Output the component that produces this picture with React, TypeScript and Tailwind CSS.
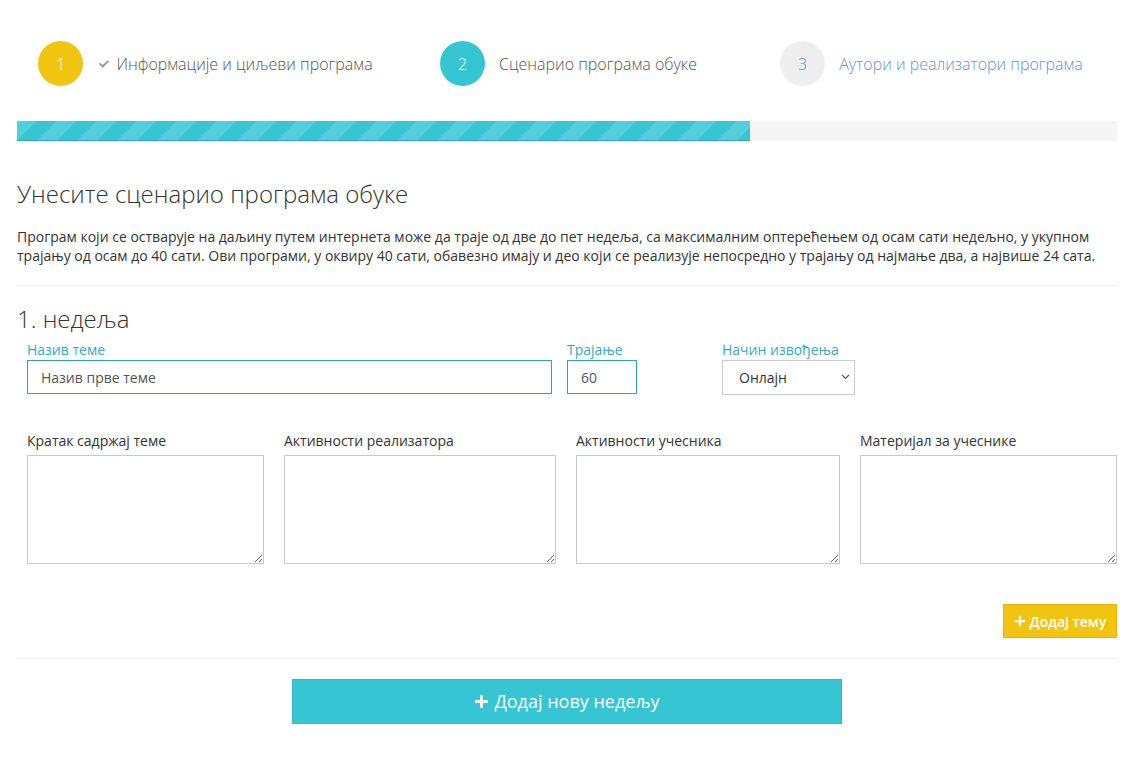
import React from "react";
import { FaCheck, FaPlus } from "react-icons/fa";

function Step({ n, label, state }: { n: string; label: string; state: "done" | "active" | "todo" }) {
  const circle =
    state === "done"
      ? "bg-[#f1c40f] text-white"
      : state === "active"
      ? "bg-[#36c5d3] text-white"
      : "bg-[#eeeeee] text-[#6c8dc6]";
  const text = state === "todo" ? "text-[#6f8fc4]" : "text-[#555555]";
  return (
    <div className="flex items-center justify-center">
      <div className={`w-[45px] h-[45px] rounded-full flex items-center justify-center text-[16px] font-light ${circle}`}>
        {n}
      </div>
      {state === "done" ? (
        <div className="flex items-center ml-[16px]">
          <FaCheck className="text-[#9a9a9a] w-[10px] h-[10px]" />
          <span className={`ml-[7px] text-[16px] font-light ${text}`}>{label}</span>
        </div>
      ) : (
        <span className={`ml-[14px] text-[16px] font-light ${text}`}>{label}</span>
      )}
    </div>
  );
}

export default function App() {
  const areas = ["Кратак садржај теме", "Активности реализатора", "Активности учесника", "Материјал за учеснике"];
  return (
    <div className="min-h-screen bg-white font-['Open_Sans',sans-serif] text-[#333333] pl-[17px] pr-[15px] text-[14px]">
      <div className="grid grid-cols-3 pt-[41px] ml-[7px] mr-[4px]">
        <Step n="1" label="Информације и циљеви програма" state="done" />
        <Step n="2" label="Сценарио програма обуке" state="active" />
        <Step n="3" label="Аутори и реализатори програма" state="todo" />
      </div>

      <div className="mt-[35px] h-[20px] bg-[#f4f4f4] flex">
        <div className="w-[66.64%] h-full bg-[#36c5d3] bg-[linear-gradient(135deg,rgba(255,255,255,.15)_25%,transparent_25%,transparent_50%,rgba(255,255,255,.15)_50%,rgba(255,255,255,.15)_75%,transparent_75%,transparent)] bg-[length:40px_40px] border-b border-[#2aacb8]" />
      </div>

      <h3 className="mt-[40px] text-[24px] font-light leading-[26px] text-[#333333]">Унесите сценарио програма обуке</h3>
      <p className="mt-[20px] leading-[19px] text-[14px] text-[#333333]">
        Програм који се остварује на даљину путем интернета може да траје од две до пет недеља, са максималним оптерећењем од осам сати недељно, у укупном трајању од осам до 40 сати. Ови програми, у оквиру 40 сати, обавезно имају и део који се реализује непосредно у трајању од најмање два, а највише 24 сата.
      </p>
      <div className="mt-[20px] border-t border-[#eeeeee]" />

      <h4 className="mt-[20px] text-[24px] font-light leading-[26px] text-[#333333]">1. недеља</h4>

      <div className="flex px-[10px] mt-[8px]">
        <div className="w-[525px]">
          <div className="leading-[20px] text-[#3ba8b6]">Назив теме</div>
          <input
            defaultValue="Назив прве теме"
            className="w-full h-[34px] border border-[#2ea5b0] px-[13px] text-[14px] text-[#555555] outline-none"
          />
        </div>
        <div className="w-[70px] ml-[15px]">
          <div className="leading-[20px] text-[#3ba8b6]">Трајање</div>
          <input
            defaultValue="60"
            className="w-full h-[34px] border border-[#2ea5b0] px-[13px] text-[14px] text-[#555555] outline-none"
          />
        </div>
        <div className="w-[133px] ml-[85px]">
          <div className="leading-[20px] text-[#3ba8b6]">Начин извођења</div>
          <div className="relative">
            <select className="appearance-none w-full h-[35px] border border-[#cccccc] bg-white pl-[16px] text-[14px] text-[#333333] outline-none">
              <option>Онлајн</option>
            </select>
            <svg className="absolute right-[5px] top-[14px] w-[9px] h-[6px]" viewBox="0 0 9 6" fill="none">
              <path d="M1 1l3.5 3.5L8 1" stroke="#555" strokeWidth="1.2" />
            </svg>
          </div>
        </div>
      </div>

      <div className="grid grid-cols-[237px_272px_264px_257px] gap-x-[20px] pl-[10px] mt-[36px]">
        {areas.map((a) => (
          <div key={a}>
            <div className="leading-[20px] text-[#333333] mb-[4px]">{a}</div>
            <textarea className="block w-full h-[109px] border border-[#c3cad6] outline-none" />
          </div>
        ))}
      </div>

      <div className="flex justify-end mt-[40px]">
        <button className="h-[34px] w-[114px] bg-[#f1c40f] border border-[#e2b60c] text-white text-[14px] font-semibold flex items-center justify-center gap-[4px]">
          <FaPlus className="w-[12px] h-[12px]" />
          <span>Додај тему</span>
        </button>
      </div>

      <div className="mt-[20px] border-t border-[#eeeeee]" />

      <div className="flex justify-center mt-[20px]">
        <button className="h-[45px] w-[550px] bg-[#36c5d3] border border-[#2fb9c6] text-white text-[18px] flex items-center justify-center gap-[5px]">
          <FaPlus className="w-[15px] h-[15px]" />
          <span>Додај нову недељу</span>
        </button>
      </div>
    </div>
  );
}
